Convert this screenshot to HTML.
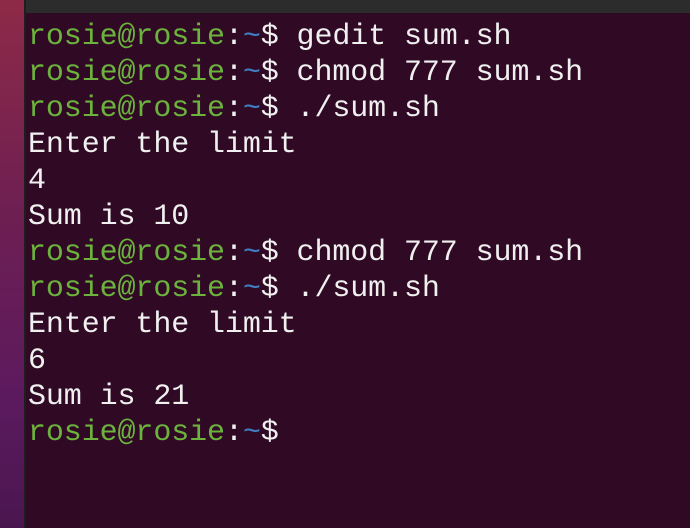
<!DOCTYPE html>
<html><head><style>
html,body{margin:0;padding:0;width:690px;height:528px;overflow:hidden;background:#300a24}
.left{position:absolute;left:0;top:0;width:24px;height:528px;background:linear-gradient(180deg,#8e2a48 0%,#6e1f52 40%,#5c1a5e 75%,#4a1650 100%)}
.edge{position:absolute;left:24px;top:0;width:2px;height:528px;background:#1e1e1e}
.bar{position:absolute;left:26px;top:0;width:664px;height:13px;background:#2c2c2c}
.term{position:absolute;left:28px;top:19px;font-family:"Liberation Mono",monospace;font-size:30px;letter-spacing:-0.1px;line-height:36px;color:#f0f0f0;white-space:pre}
.g{color:#6cb33e}
.b{color:#3f7fc4}
</style></head><body>
<div class="left"></div><div class="edge"></div><div class="bar"></div>
<div class="term"><span class="g">rosie@rosie</span>:<span class="b">~</span>$ gedit sum.sh
<span class="g">rosie@rosie</span>:<span class="b">~</span>$ chmod 777 sum.sh
<span class="g">rosie@rosie</span>:<span class="b">~</span>$ ./sum.sh
Enter the limit
4
Sum is 10
<span class="g">rosie@rosie</span>:<span class="b">~</span>$ chmod 777 sum.sh
<span class="g">rosie@rosie</span>:<span class="b">~</span>$ ./sum.sh
Enter the limit
6
Sum is 21
<span class="g">rosie@rosie</span>:<span class="b">~</span>$</div>
</body></html>
